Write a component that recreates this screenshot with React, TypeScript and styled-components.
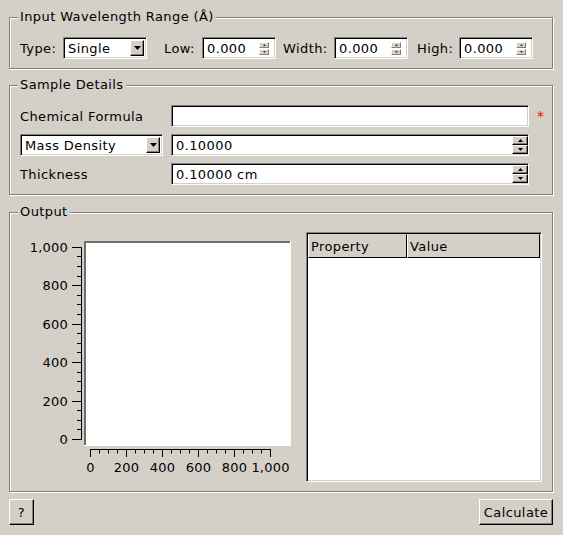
import React from 'react';
import styled, { createGlobalStyle, css } from 'styled-components';

const Global = createGlobalStyle`
  html, body { margin: 0; padding: 0; background: #d4d0c8; }
  body { font-family: "DejaVu Sans", Verdana, sans-serif; font-size: 13px; color: #000; }
  * { box-sizing: border-box; }
`;

const sunken = css`
  background: #fff;
  border: 1px solid;
  border-color: #808080 #fff #fff #808080;
  box-shadow: inset 1px 1px 0 #000, inset -1px -1px 0 #d4d0c8;
`;

const raised = css`
  background: #d4d0c8;
  border: 1px solid;
  border-color: #fff #000 #000 #fff;
  box-shadow: inset -1px -1px 0 #808080;
`;

const Window = styled.div`
  width: 563px;
  height: 535px;
  padding: 9px 10px 10px 9px;
  background: #d4d0c8;
  display: flex;
  flex-direction: column;
  letter-spacing: 0.4px;
`;

const Group = styled.fieldset<{ $mt?: number }>`
  margin: ${(p) => p.$mt ?? 0}px 0 0 0;
  padding: 12px 10px 9px 10px;
  border: 1px solid #808080;
  box-shadow: 1px 1px 0 #fff, inset 1px 1px 0 #fff;
  min-width: 0;
`;

const Legend = styled.legend`
  padding: 0 2px;
  margin-left: -2px;
  line-height: 16px;
  font-size: 13px;
  background: #d4d0c8;
`;

const Row = styled.div`
  display: flex;
  align-items: center;
  height: 22px;
`;

const Label = styled.span<{ $w?: number; $ml?: number }>`
  flex: none;
  white-space: nowrap;
  ${(p) => (p.$w ? `width: ${p.$w}px;` : '')}
  margin-left: ${(p) => p.$ml ?? 0}px;
`;

const Combo = styled.div<{ $w?: number }>`
  ${sunken};
  ${(p) => (p.$w ? `width: ${p.$w}px;` : '')}
  flex: none;
  height: 22px;
  display: flex;
  align-items: center;
  padding: 2px;
`;

const ComboText = styled.span`
  flex: 1;
  padding-left: 2px;
  white-space: nowrap;
  overflow: hidden;
`;

const ComboButton = styled.span`
  ${raised};
  width: 14px;
  height: 16px;
  flex: none;
  display: flex;
  align-items: center;
  justify-content: center;
`;

const Spin = styled.div<{ $w?: number; $big?: boolean }>`
  ${sunken};
  ${(p) => (p.$w ? `width: ${p.$w}px;` : '')}
  flex: none;
  height: 22px;
  display: flex;
  align-items: center;
  padding: ${(p) => (p.$big ? '1px 0 1px 1px' : '1px 6px 1px 1px')};
`;

const SpinText = styled.span`
  flex: 1;
  padding-left: 3px;
  white-space: nowrap;
`;

const SpinButtons = styled.div<{ $big?: boolean }>`
  display: flex;
  flex-direction: column;
  gap: ${(p) => (p.$big ? 0 : 1)}px;
  flex: none;
`;

const SpinButton = styled.span<{ $big?: boolean }>`
  ${raised};
  ${(p) =>
    p.$big
      ? css`
          width: 16px;
          height: 9px;
        `
      : css`
          width: 10px;
          height: 6px;
          border-color: #fff #808080 #808080 #fff;
          box-shadow: none;
        `}
  display: flex;
  align-items: center;
  justify-content: center;
`;

const LineEdit = styled.div`
  ${sunken};
  height: 22px;
`;

const FormGrid = styled.div`
  display: grid;
  grid-template-columns: 143px 358px 1fr;
  grid-auto-rows: 22px;
  column-gap: 8px;
  row-gap: 7px;
  align-items: center;
`;

const Required = styled.span`
  color: #ff0000;
  justify-self: center;
  font-size: 14px;
`;

const OutputBody = styled.div`
  display: flex;
  gap: 10px;
  height: 250px;
`;

const ChartBox = styled.div`
  width: 276px;
  height: 250px;
  flex: none;
  letter-spacing: 0.2px;
`;

const Table = styled.div`
  ${sunken};
  width: 236px;
  height: 250px;
  padding: 1px;
  display: flex;
  flex-direction: column;
`;

const HeaderRow = styled.div`
  display: flex;
  height: 24px;
  flex: none;
`;

const HeaderCell = styled.div<{ $w?: number }>`
  background: #d4d0c8;
  border-style: solid;
  border-width: 1px;
  border-color: #d4d0c8 #000 #000 #fff;
  ${(p) => (p.$w ? `width: ${p.$w}px; flex: none;` : 'flex: 1;')}
  padding-left: 2px;
  display: flex;
  align-items: center;
`;

const Footer = styled.div`
  display: flex;
  justify-content: space-between;
  margin-top: 7px;
`;

const PushButton = styled.button<{ $w: number }>`
  ${raised};
  width: ${(p) => p.$w}px;
  height: 26px;
  padding: 0;
  font: inherit;
  letter-spacing: inherit;
  color: #000;
`;

const Tri = ({ dir, w, h, color = '#000' }: { dir: 'up' | 'down'; w: number; h: number; color?: string }) => (
  <svg width={w} height={h} viewBox={`0 0 ${w} ${h}`} style={{ display: 'block' }}>
    <polygon
      points={dir === 'down' ? `0,0 ${w},0 ${w / 2},${h}` : `0,${h} ${w},${h} ${w / 2},0`}
      fill={color}
    />
  </svg>
);

const ComboBox = ({ text, w }: { text: string; w: number }) => (
  <Combo $w={w}>
    <ComboText>{text}</ComboText>
    <ComboButton>
      <Tri dir="down" w={7} h={4} />
    </ComboButton>
  </Combo>
);

const SpinBox = ({ text, w, big }: { text: string; w?: number; big?: boolean }) => (
  <Spin $w={w} $big={big}>
    <SpinText>{text}</SpinText>
    <SpinButtons $big={big}>
      <SpinButton $big={big}>
        {big ? <Tri dir="up" w={5} h={3} /> : <Tri dir="up" w={3} h={2} color="#404040" />}
      </SpinButton>
      <SpinButton $big={big}>
        {big ? <Tri dir="down" w={5} h={3} /> : <Tri dir="down" w={3} h={2} color="#404040" />}
      </SpinButton>
    </SpinButtons>
  </Spin>
);

const Chart = () => {
  const yTick = (v: number) => Math.round(207 - v * 0.19231) + 0.5;
  const xTick = (v: number) => Math.floor(70.7 + v * 0.1793) + 0.5;
  const vals: number[] = [];
  for (let v = 0; v <= 1000; v += 50) vals.push(v);
  const fmt = (v: number) => (v === 1000 ? '1,000' : String(v));
  return (
    <svg width={276} height={250} viewBox="0 0 276 250" style={{ display: 'block' }}>
      <rect x={64} y={9} width={207} height={205} fill="#fff" />
      <rect x={64} y={9} width={206} height={2} fill="#6e6e6e" />
      <rect x={64} y={9} width={2} height={204} fill="#6e6e6e" />
      <line x1={61.5} y1={yTick(1000)} x2={61.5} y2={yTick(0) + 0.5} stroke="#000" strokeWidth={1} />
      {vals.map((v) => {
        const y = yTick(v);
        const major = v % 200 === 0;
        return <line key={`y${v}`} x1={major ? 52 : 57} y1={y} x2={61.5} y2={y} stroke="#000" strokeWidth={1} />;
      })}
      {vals
        .filter((v) => v % 200 === 0)
        .map((v) => (
          <text key={`yl${v}`} x={48} y={yTick(v) + 4.7} textAnchor="end" fontFamily="DejaVu Sans" fontSize={13} fill="#000">
            {fmt(v)}
          </text>
        ))}
      <line x1={xTick(0) - 0.5} y1={217.5} x2={xTick(1000) + 0.5} y2={217.5} stroke="#000" strokeWidth={1} />
      {vals.map((v) => {
        const x = xTick(v);
        const major = v % 200 === 0;
        return <line key={`x${v}`} x1={x} y1={217.5} x2={x} y2={major ? 225 : 221.5} stroke="#000" strokeWidth={1} />;
      })}
      {vals
        .filter((v) => v % 200 === 0)
        .map((v) => (
          <text key={`xl${v}`} x={xTick(v)} y={240} textAnchor="middle" fontFamily="DejaVu Sans" fontSize={13} fill="#000">
            {fmt(v)}
          </text>
        ))}
    </svg>
  );
};

export default function App() {
  return (
    <>
      <Global />
      <Window>
        <Group>
          <Legend>Input Wavelength Range (Å)</Legend>
          <Row>
            <Label $w={43}>Type:</Label>
            <ComboBox text="Single" w={84} />
            <Label $w={38} $ml={17}>Low:</Label>
            <SpinBox text="0.000" w={74} />
            <Label $w={51} $ml={7}>Width:</Label>
            <SpinBox text="0.000" w={74} />
            <Label $w={42} $ml={9}>High:</Label>
            <SpinBox text="0.000" w={74} />
          </Row>
        </Group>

        <Group $mt={8}>
          <Legend>Sample Details</Legend>
          <FormGrid>
            <Label>Chemical Formula</Label>
            <LineEdit />
            <Required>*</Required>
            <ComboBox text="Mass Density" w={143} />
            <SpinBox text="0.10000" big />
            <span />
            <Label>Thickness</Label>
            <SpinBox text="0.10000 cm" big />
            <span />
          </FormGrid>
        </Group>

        <Group $mt={9}>
          <Legend>Output</Legend>
          <OutputBody>
            <ChartBox>
              <Chart />
            </ChartBox>
            <Table>
              <HeaderRow>
                <HeaderCell $w={99}>Property</HeaderCell>
                <HeaderCell>Value</HeaderCell>
              </HeaderRow>
            </Table>
          </OutputBody>
        </Group>

        <Footer>
          <PushButton $w={25}>?</PushButton>
          <PushButton $w={74}>Calculate</PushButton>
        </Footer>
      </Window>
    </>
  );
}
